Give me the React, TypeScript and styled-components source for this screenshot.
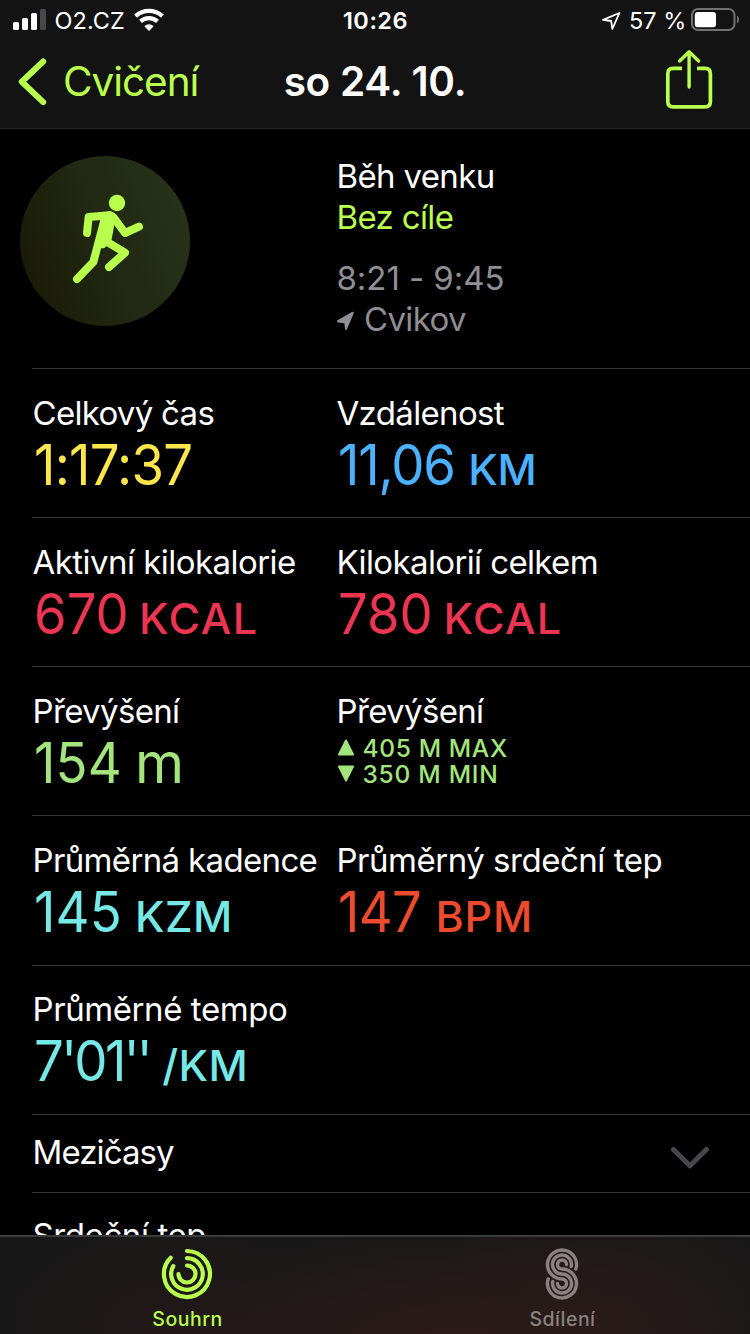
import React from 'react';
import styled, { createGlobalStyle } from 'styled-components';

const LIME = '#b9ff4e';

const GlobalStyle = createGlobalStyle`
  * { box-sizing: border-box; }
  html, body { margin: 0; padding: 0; background: #000; }
  body { font-family: Inter, "Liberation Sans", sans-serif; color: #fff; }
  svg { display: block; flex: none; }
`;

const Screen = styled.div`
  width: 750px;
  height: 1334px;
  display: flex;
  flex-direction: column;
  overflow: hidden;
  background: #000;
`;

const TopBar = styled.header`
  flex: none;
  height: 129px;
  background: #131313;
  border-bottom: 1px solid #272727;
`;

const StatusBar = styled.div`
  height: 40px;
  display: grid;
  grid-template-columns: 1fr auto 1fr;
  font-size: 23.5px;
  line-height: 41px;
`;

const StatusGroup = styled.div<{ $end?: boolean }>`
  display: flex;
  justify-content: ${(p) => (p.$end ? 'flex-end' : 'flex-start')};
  padding: ${(p) => (p.$end ? '0 11px 0 0' : '0 0 0 13px')};
`;

const StatusText = styled.span<{ $width: number; $ls: number; $left: number }>`
  width: ${(p) => p.$width}px;
  margin-left: ${(p) => p.$left}px;
  letter-spacing: ${(p) => p.$ls}px;
  white-space: nowrap;
`;

const Clock = styled.div`
  font-weight: 600;
  font-size: 23.5px;
  line-height: 42px;
  letter-spacing: 0.5px;
  padding-left: 1px;
`;

const NavBar = styled.nav`
  height: 88px;
  display: grid;
  grid-template-columns: 1fr auto 1fr;
  line-height: 83px;
  font-size: 40.5px;
`;

const BackButton = styled.div`
  display: flex;
  padding-left: 18px;
  color: ${LIME};
`;

const BackLabel = styled.span`
  margin-left: 15px;
  letter-spacing: -1.05px;
`;

const NavTitle = styled.div`
  font-weight: 600;
  letter-spacing: -0.25px;
`;

const ShareButton = styled.div`
  display: flex;
  justify-content: flex-end;
  padding: 8px 36px 0 0;
`;

const Content = styled.main`
  flex: 1;
  min-height: 0;
  overflow: hidden;
`;

const Row = styled.section<{ $height: number; $top: number }>`
  height: ${(p) => p.$height}px;
  margin-left: 32px;
  padding-top: ${(p) => p.$top}px;
  display: grid;
  grid-template-columns: 304px 1fr;
  align-content: start;
  border-bottom: 1px solid #353537;
`;

const Label = styled.div<{ $color?: string; $ls?: number }>`
  height: 41px;
  padding-left: 0.5px;
  line-height: 41px;
  font-size: 33px;
  letter-spacing: ${(p) => p.$ls ?? -0.65}px;
  white-space: nowrap;
  color: ${(p) => p.$color ?? '#fff'};
`;

const Value = styled.div<{ $color: string }>`
  height: 62px;
  padding-left: 1.5px;
  line-height: 62px;
  font-size: 56px;
  white-space: nowrap;
  color: ${(p) => p.$color};
`;

const Digits = styled.span<{ $ls: number }>`
  display: inline-block;
  letter-spacing: ${(p) => p.$ls}px;
  transform: scaleX(0.94);
  transform-origin: left;
`;

const Unit = styled.span<{ $gap: number; $ls: number; $full?: boolean }>`
  margin-left: ${(p) => p.$gap}px;
  font-size: ${(p) => (p.$full ? 56 : 43)}px;
  font-weight: ${(p) => (p.$full ? 400 : 500)};
  letter-spacing: ${(p) => p.$ls}px;
`;

const Badge = styled.div`
  width: 170px;
  height: 170px;
  margin-left: -12px;
  border-radius: 50%;
  display: flex;
  justify-content: center;
  align-items: center;
  background: linear-gradient(70deg, #1a1b07 10%, #212813 50%, #28331a 95%);
`;

const Place = styled.div`
  display: flex;
`;

const TimeGroup = styled.div`
  padding-top: 20px;
`;

const Extremes = styled.div`
  padding-top: 3px;
  color: #a3e57c;
`;

const Extreme = styled.div`
  display: flex;
  align-items: center;
  gap: 7.5px;
  height: 26px;
  padding-left: 1px;
  font-size: 24.5px;
  font-weight: 500;
  line-height: 26px;
  white-space: nowrap;
`;

const ExtremeText = styled.span<{ $ls: number }>`
  letter-spacing: ${(p) => p.$ls}px;
`;

const DisclosureRow = styled(Row)`
  grid-template-columns: 1fr auto;
  padding-right: 40px;
`;

const ChevronSlot = styled.div`
  padding-top: 13px;
`;

const TabBar = styled.footer`
  flex: none;
  height: 99px;
  display: grid;
  grid-template-columns: 1fr 1fr;
  border-top: 2px solid #3a3b3b;
  background:
    radial-gradient(ellipse 300px 130px at 455px 115px, #301b17 0%, rgba(42, 27, 25, 0.7) 45%, rgba(30, 24, 23, 0) 100%),
    radial-gradient(ellipse 190px 120px at 610px 80px, rgba(42, 28, 26, 0.75) 0%, rgba(34, 25, 24, 0) 100%),
    radial-gradient(ellipse 180px 110px at 170px 90px, #211817 0%, rgba(28, 24, 24, 0) 100%),
    #181818;
`;

const Tab = styled.div<{ $active?: boolean }>`
  display: flex;
  flex-direction: column;
  align-items: center;
  padding: 11px 1px 0 0;
  color: ${(p) => (p.$active ? LIME : '#8a8180')};
`;

const TabLabel = styled.span<{ $ls: number }>`
  margin: 7px 0 0 1px;
  font-size: 19.5px;
  font-weight: 500;
  line-height: 24px;
  letter-spacing: ${(p) => p.$ls}px;
`;

const SignalIcon = () => (
  <svg width="33" height="40" viewBox="13 0 33 40" fill="#fff">
    <rect x="13" y="22" width="6" height="8" rx="1.5" />
    <rect x="22" y="18" width="6" height="12" rx="1.5" />
    <rect x="31" y="13" width="6" height="17" rx="1.5" />
    <rect x="40" y="9" width="6" height="21" rx="1.5" fill="#48484a" />
  </svg>
);

const WifiIcon = () => (
  <svg width="30" height="40" viewBox="134.7 0 30 40" fill="none" stroke="#fff">
    <path d="M136.3 16.1 A19.8 19.8 0 0 1 163.1 16.1" strokeWidth="4.3" />
    <path d="M141.2 21.4 A12.6 12.6 0 0 1 158.2 21.4" strokeWidth="4.2" />
    <path d="M149.7 31 L145 26.2 A6.8 6.8 0 0 1 154.4 26.2 Z" fill="#fff" stroke="none" />
  </svg>
);

const StatusLocationIcon = () => (
  <svg width="20" height="40" viewBox="601 0 20 40" fill="none" stroke="#fff" strokeWidth="1.8" strokeLinejoin="round">
    <path d="M619.4 13 L603 19.9 L611.2 21 L612.3 29 Z" />
  </svg>
);

const BatteryIcon = () => (
  <svg width="49" height="40" viewBox="690 0 49 40">
    <rect x="692" y="9" width="42.5" height="21" rx="6" fill="none" stroke="#727272" strokeWidth="2" />
    <rect x="694.8" y="12" width="21.2" height="15.2" rx="3" fill="#fff" />
    <path d="M737 15.6 Q739 16.5 739 19.5 Q739 22.5 737 23.4 Z" fill="#727272" />
  </svg>
);

const BackIcon = () => (
  <svg width="30" height="88" viewBox="18 40 30 88" fill="none" stroke={LIME} strokeWidth="6" strokeLinecap="round" strokeLinejoin="round">
    <path d="M43.2 61.5 L21.8 81.8 L43.2 102.1" />
  </svg>
);

const ShareIcon = () => (
  <svg width="50" height="64" viewBox="664 48 50 64" fill="none" stroke={LIME} strokeWidth="3.7">
    <path d="M682 68.4 H673 Q667.8 68.4 667.8 73.6 V101.6 Q667.8 106.9 673 106.9 H705.2 Q710.4 106.9 710.4 101.6 V73.6 Q710.4 68.4 705.2 68.4 H697" />
    <path d="M689.1 87 V53 M679.6 61 L689.1 51.8 L698.6 61" strokeWidth="3.4" strokeLinecap="round" strokeLinejoin="round" />
  </svg>
);

const RunnerIcon = () => (
  <svg width="100" height="120" viewBox="-15 3 300 360" fill="none" stroke={LIME} strokeWidth="24" strokeLinecap="round" strokeLinejoin="round">
    <circle cx="171" cy="69" r="24.5" fill={LIME} stroke="none" />
    <path d="M81 159 L86 111 L148 106" />
    <path d="M148 106 Q158 107 165 118 L195 159 L237 140" />
    <path d="M135 114 L100 246 L51 297" />
    <path d="M140 185 L195 218 L147 261" />
    <path d="M122 106 L166 118 L153 188 L132 205 L112 205 Z" fill={LIME} stroke="none" />
  </svg>
);

const PlaceIcon = () => (
  <svg width="27.5" height="41" viewBox="336.5 299 27.5 41" fill="#8e8e93">
    <path d="M352.4 312 Q354.8 311.3 354.1 313.5 L347.5 329.3 Q346.3 331.2 345.6 329 L344.8 323.2 L338.6 322.4 Q336.4 321.6 338 320.3 Z" />
  </svg>
);

const UpIcon = () => (
  <svg width="18" height="26" viewBox="0 0 18 26" fill="currentColor" stroke="currentColor" strokeWidth="2" strokeLinejoin="round">
    <path d="M9 5.5 L16 19.5 H2 Z" />
  </svg>
);

const DownIcon = () => (
  <svg width="18" height="26" viewBox="0 0 18 26" fill="currentColor" stroke="currentColor" strokeWidth="2" strokeLinejoin="round">
    <path d="M9 19.5 L2 5.5 H16 Z" />
  </svg>
);

const ChevronDown = () => (
  <svg width="40" height="26" viewBox="0 0 40 26" fill="none" stroke="#48484a" strokeWidth="5" strokeLinecap="round" strokeLinejoin="round">
    <path d="M3.4 4.5 L19.9 20.8 L36.4 4.5" />
  </svg>
);

const RingsIcon = () => (
  <svg width="52" height="52" viewBox="-26 -26 52 52" fill="none" stroke="currentColor" strokeWidth="4.2" strokeLinecap="round">
    <path d="M0 -23 A23 23 0 1 1 -16.3 -16.3" />
    <path d="M0 -15.8 A15.8 15.8 0 1 1 -13.7 -7.9" />
    <path d="M0 -8.5 A8.5 8.5 0 1 1 -8.5 0" />
  </svg>
);

const SharingIcon = () => (
  <svg width="34" height="52" viewBox="-17 -26 34 52" fill="none" stroke="currentColor" strokeWidth="3.4" strokeLinecap="round">
    <path d="M13.8 -5 A14.5 14.5 0 1 0 0 5 A4.5 4.5 0 1 1 -4.5 9.5" />
    <path d="M9.2 -7.5 A9.5 9.5 0 1 0 0 0 A9.5 9.5 0 1 1 -9.2 7.5" />
    <path d="M4.5 -9.5 A4.5 4.5 0 1 0 0 -5 A14.5 14.5 0 1 1 -13.8 5" />
  </svg>
);

type Metric = {
  label: string;
  labelLs?: number;
  value: string;
  ls: number;
  unit?: string;
  gap?: number;
  unitLs?: number;
  full?: boolean;
  color: string;
};

const Stat = ({ m }: { m: Metric }) => (
  <div>
    <Label $ls={m.labelLs}>{m.label}</Label>
    <Value $color={m.color}>
      <Digits $ls={m.ls}>{m.value}</Digits>
      {m.unit && (
        <Unit $gap={m.gap ?? 6} $ls={m.unitLs ?? 0} $full={m.full}>
          {m.unit}
        </Unit>
      )}
    </Value>
  </div>
);

const time: Metric = { label: 'Celkový čas', labelLs: -0.7, value: '1:17:37', ls: -0.8, color: '#fde64b' };
const distance: Metric = { label: 'Vzdálenost', labelLs: -0.65, value: '11,06', ls: -1.2, unit: 'KM', gap: 6.5, unitLs: -0.5, color: '#4cb2ff' };
const active: Metric = { label: 'Aktivní kilokalorie', labelLs: -0.54, value: '670', ls: 0, unit: 'KCAL', gap: 4.5, unitLs: 1.6, color: '#ec3553' };
const total: Metric = { label: 'Kilokalorií celkem', labelLs: -0.62, value: '780', ls: 0, unit: 'KCAL', gap: 5.2, unitLs: 1.4, color: '#ec3553' };
const climb: Metric = { label: 'Převýšení', value: '154', ls: 0.2, unit: 'm', gap: 7.9, full: true, color: '#a3e57c' };
const cadence: Metric = { label: 'Průměrná kadence', value: '145', ls: 0.2, unit: 'KZM', gap: 7.9, unitLs: 0.5, color: '#76e9e7' };
const heart: Metric = { label: 'Průměrný srdeční tep', labelLs: -0.48, value: '147', ls: -0.7, unit: 'BPM', gap: 9.4, unitLs: 0.9, color: '#ee4a2e' };
const pace: Metric = { label: 'Průměrné tempo', labelLs: -0.42, value: "7'01''", ls: -2.8, unit: '/KM', gap: 5.3, unitLs: 0.4, color: '#76e9e7' };

export default function App() {
  return (
    <>
      <GlobalStyle />
      <Screen>
        <TopBar>
          <StatusBar>
            <StatusGroup>
              <SignalIcon />
              <StatusText $left={8.5} $width={79.5} $ls={0.1}>O2.CZ</StatusText>
              <WifiIcon />
            </StatusGroup>
            <Clock>10:26</Clock>
            <StatusGroup $end>
              <StatusLocationIcon />
              <StatusText $left={8} $width={61} $ls={0}>57 %</StatusText>
              <BatteryIcon />
            </StatusGroup>
          </StatusBar>
          <NavBar>
            <BackButton>
              <BackIcon />
              <BackLabel>Cvičení</BackLabel>
            </BackButton>
            <NavTitle>so 24. 10.</NavTitle>
            <ShareButton>
              <ShareIcon />
            </ShareButton>
          </NavBar>
        </TopBar>

        <Content>
          <Row $height={240} $top={27}>
            <Badge>
              <RunnerIcon />
            </Badge>
            <div>
              <Label>Běh venku</Label>
              <Label $color={LIME}>Bez cíle</Label>
              <TimeGroup>
                <Label $color="#8e8e93" $ls={-0.05}>8:21 - 9:45</Label>
                <Place>
                  <PlaceIcon />
                  <Label $color="#8e8e93">Cvikov</Label>
                </Place>
              </TimeGroup>
            </div>
          </Row>
          <Row $height={149} $top={24}>
            <Stat m={time} />
            <Stat m={distance} />
          </Row>
          <Row $height={149} $top={24}>
            <Stat m={active} />
            <Stat m={total} />
          </Row>
          <Row $height={149} $top={24}>
            <Stat m={climb} />
            <div>
              <Label>Převýšení</Label>
              <Extremes>
                <Extreme>
                  <UpIcon />
                  <ExtremeText $ls={0.65}>405 M MAX</ExtremeText>
                </Extreme>
                <Extreme>
                  <DownIcon />
                  <ExtremeText $ls={0.75}>350 M MIN</ExtremeText>
                </Extreme>
              </Extremes>
            </div>
          </Row>
          <Row $height={150} $top={24}>
            <Stat m={cadence} />
            <Stat m={heart} />
          </Row>
          <Row $height={149} $top={23}>
            <Stat m={pace} />
          </Row>
          <DisclosureRow $height={78} $top={17}>
            <Label $ls={-0.9}>Mezičasy</Label>
            <ChevronSlot>
              <ChevronDown />
            </ChevronSlot>
          </DisclosureRow>
          <Row $height={149} $top={22}>
            <Label $ls={-0.4}>Srdeční tep</Label>
          </Row>
        </Content>

        <TabBar>
          <Tab $active>
            <RingsIcon />
            <TabLabel $ls={0.5}>Souhrn</TabLabel>
          </Tab>
          <Tab>
            <SharingIcon />
            <TabLabel $ls={0.5}>Sdílení</TabLabel>
          </Tab>
        </TabBar>
      </Screen>
    </>
  );
}
